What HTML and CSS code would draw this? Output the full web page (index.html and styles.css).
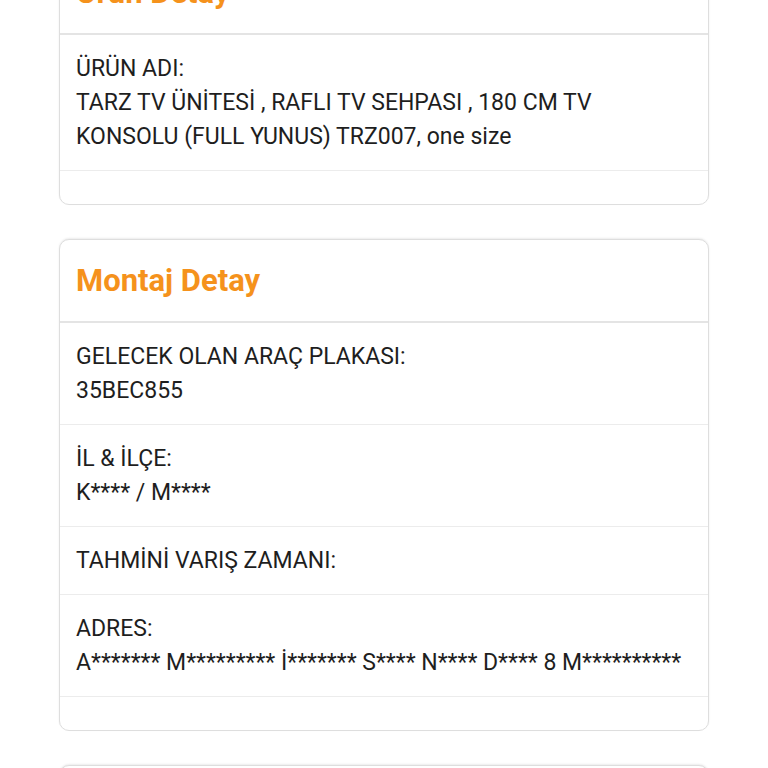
FILE: index.html
```html
<!DOCTYPE html>
<html lang="tr">
<head>
  <meta charset="UTF-8" />
  <meta name="viewport" content="width=device-width, initial-scale=1.0"/>
  <title>Sipariş Takip</title>
  <link rel="stylesheet" href="styles.css">
</head>
<body>

  <div class="page">

    <!-- Ürün detay -->
    <div class="card">
      <div class="card-header">Ürün Detay</div>
      <div class="row">
        ÜRÜN ADI:<br>
        TARZ TV ÜNİTESİ , RAFLI TV SEHPASI , 180 CM TV KONSOLU (FULL YUNUS) TRZ007, one size
      </div>
      <div class="row-empty"></div>
    </div>

    <!-- Montaj detay -->
    <div class="card">
      <div class="card-header">Montaj Detay</div>
      <div class="row">
        GELECEK OLAN ARAÇ PLAKASI:<br>
        35BEC855
      </div>
      <div class="row">
        İL &amp; İLÇE:<br>
        K**** / M****
      </div>
      <div class="row">
        TAHMİNİ VARIŞ ZAMANI:
      </div>
      <div class="row">
        ADRES:<br>
        A******* M********* İ******* S**** N**** D**** 8 M**********
      </div>
      <div class="row-empty"></div>
    </div>

    <!-- Sonraki kart -->
    <div class="card">
      <div class="card-header">Sipariş Detay</div>
    </div>

  </div>

</body>
</html>
```

FILE: styles.css
```css
* {
  box-sizing: border-box;
}

html, body {
  margin: 0;
  padding: 0;
  background-color: #fff;
  font-family: Roboto, "Noto Sans", Arial, sans-serif;
  color: #1e1e1e;
  overflow: hidden;
}

.page {
  width: 650px;
  margin: -49px auto 0;
  display: flex;
  flex-direction: column;
  gap: 34px;
}

.card {
  border: 1px solid #dedede;
  border-radius: 10px;
  box-shadow: 0 -1px 2px rgba(0, 0, 0, 0.08);
  background: #fff;
}

.card-header {
  height: 83px;
  display: flex;
  align-items: center;
  padding: 0 16px;
  font-size: 31px;
  font-weight: bold;
  color: #f5921c;
  border-bottom: 2px solid #e4e4e4;
}

.row {
  padding: 17px 16px 16px;
  font-size: 23px;
  line-height: 34px;
  border-bottom: 1px solid #ececec;
}

.row-empty {
  height: 33px;
}
```
